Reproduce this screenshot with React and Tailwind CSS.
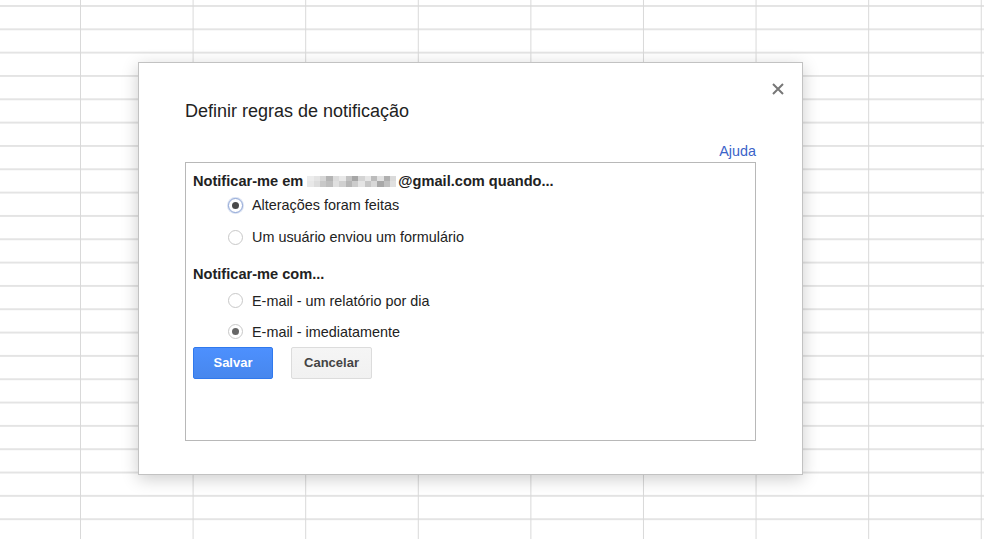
import React from "react";

const mosaicTop = [
  "#ececec", "#e4e4e4", "#d6d6d6", "#b4b4b4", "#dcdcdc", "#e8e8e8", "#c2c2c2",
  "#a6a6a6", "#d4d4d4", "#e6e6e6", "#bcbcbc", "#e2e2e2", "#b0b0b0", "#dadada",
];
const mosaicBottom = [
  "#e8e8e8", "#dddddd", "#c8c8c8", "#bebebe", "#e0e0e0", "#d0d0d0", "#b6b6b6",
  "#cccccc", "#e4e4e4", "#c6c6c6", "#d8d8d8", "#a8a8a8", "#c0c0c0", "#e0e0e0",
];

function Radio({ checked, focused }) {
  return (
    <span
      className={
        "flex items-center justify-center w-[15px] h-[15px] rounded-full bg-white border " +
        (focused ? "border-[#8fa6d6] shadow-[0_0_0_1px_rgba(143,166,214,0.35)]" : "border-[#c8c8c8]")
      }
    >
      {checked ? (
        <span className={"block w-[7px] h-[7px] rounded-full " + (focused ? "bg-[#4a4a4a]" : "bg-[#666]")} />
      ) : null}
    </span>
  );
}

function Row({ checked, focused, label, h }) {
  return (
    <div className={"flex items-center pl-[35px] " + h}>
      <Radio checked={checked} focused={focused} />
      <span className="ml-[9px] text-[14.4px] leading-[16px] text-[#222]">{label}</span>
    </div>
  );
}

export default function App() {
  return (
    <div
      className="relative w-[984px] h-[539px] overflow-hidden bg-white bg-[linear-gradient(to_right,#d9d9d9_0_1px,transparent_1px),linear-gradient(to_bottom,#e4e4e4_0_2px,transparent_2px)] [background-size:112.6px_100%,100%_23.33px] [background-position:80px_0,0_5px]"
      style={{ fontFamily: '"Liberation Sans", Arial, sans-serif' }}
    >
      <div className="absolute left-[138px] top-[62px] w-[665px] h-[413px] bg-white border border-[#c2c2c2] shadow-[0_4px_16px_rgba(0,0,0,0.2)] px-[46px] pt-[37px]">
        <button className="absolute right-[18px] top-[20px] w-[12px] h-[12px] p-0" aria-label="Fechar">
          <svg width="12" height="12" viewBox="0 0 12 12" className="block">
            <path d="M1 1 L11 11 M11 1 L1 11" stroke="#777" strokeWidth="2" />
          </svg>
        </button>

        <div className="text-[18px] leading-[22px] text-[#222]">Definir regras de notificação</div>

        <div className="mt-[21px] flex justify-end">
          <span className="text-[14.4px] leading-[17px] text-[#3b63c9]">Ajuda</span>
        </div>

        <div className="mt-[2px] h-[279px] border border-[#b8b8b8] pl-[7px] pt-[10px]">
          <div className="flex items-center text-[14.6px] leading-[16px] font-bold text-[#222]">
            <span className="whitespace-pre">Notificar-me em </span>
            <span className="inline-flex flex-col w-[89px] h-[11px] mr-[2px]">
              <span className="flex h-[5px]">
                {mosaicTop.map((c, i) => (
                  <span key={i} className="flex-1 h-full" style={{ background: c }} />
                ))}
              </span>
              <span className="flex h-[6px]">
                {mosaicBottom.map((c, i) => (
                  <span key={i} className="flex-1 h-full" style={{ background: c }} />
                ))}
              </span>
            </span>
            <span>@gmail.com quando...</span>
          </div>

          <Row checked focused label="Alterações foram feitas" h="h-[32px]" />
          <Row label="Um usuário enviou um formulário" h="h-[32px]" />

          <div className="mt-[13px] text-[14.6px] leading-[16px] font-bold text-[#222]">Notificar-me com...</div>

          <div className="mt-[3px]">
            <Row label="E-mail - um relatório por dia" h="h-[31px]" />
            <Row checked label="E-mail - imediatamente" h="h-[31px]" />
          </div>

          <div className="flex gap-[18px]">
            <button className="w-[80px] h-[32px] rounded-[2px] border border-[#3079ed] bg-[linear-gradient(to_bottom,#4d90fe,#4787ed)] text-white text-[13px] font-bold">
              Salvar
            </button>
            <button className="w-[81px] h-[32px] rounded-[2px] border border-[#dcdcdc] bg-[linear-gradient(to_bottom,#f5f5f5,#f1f1f1)] text-[#444] text-[13px] font-bold">
              Cancelar
            </button>
          </div>
        </div>
      </div>
    </div>
  );
}
